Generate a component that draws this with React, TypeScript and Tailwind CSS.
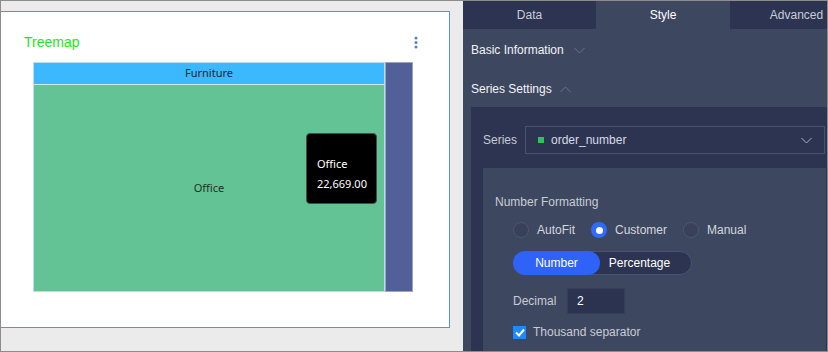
import React from "react";

function Chevron({ up = false, className = "" }: { up?: boolean; className?: string }) {
  return (
    <svg width="11" height="7" viewBox="0 0 11 7" className={className}>
      <path d={up ? "M0.5 6 L5.5 1 L10.5 6" : "M0.5 1 L5.5 6 L10.5 1"} fill="none" stroke="currentColor" strokeWidth="1" />
    </svg>
  );
}

function Radio({ checked, label }: { checked?: boolean; label: string }) {
  return (
    <div className="flex items-center">
      {checked ? (
        <div className="w-[16px] h-[16px] rounded-full bg-[#2f6bff] flex items-center justify-center">
          <div className="w-[7px] h-[7px] rounded-full bg-white" />
        </div>
      ) : (
        <div className="w-[16px] h-[16px] rounded-full border border-[#4d5674] bg-[#38405a]" />
      )}
      <span className="ml-[8px] text-[12px] text-[#d2d6df]">{label}</span>
    </div>
  );
}

export default function App() {
  return (
    <div
      className="w-[828px] h-[352px] border border-[#8c8c8c] flex overflow-hidden"
      style={{ fontFamily: '"Liberation Sans", Arial, sans-serif' }}
    >
      {/* Left pane */}
      <div className="w-[462px] h-full bg-[#ebebeb] pt-[10px]">
        <div className="relative w-[449px] h-[317px] bg-white border border-l-0 border-[#5b8def]">
          <div className="flex items-center justify-between pl-[23px] pr-[31px] pt-[22px] h-[38px]">
            <span className="text-[14px] leading-[16px] text-[#22e622]">Treemap</span>
            <svg width="4" height="13" viewBox="0 0 4 13">
              <circle cx="2" cy="2" r="1.5" fill="#4a7ee0" />
              <circle cx="2" cy="6.5" r="1.5" fill="#4a7ee0" />
              <circle cx="2" cy="11" r="1.5" fill="#4a7ee0" />
            </svg>
          </div>
          <div
            className="ml-[32px] mt-[12px] flex h-[230px] w-[380px]"
            style={{ fontFamily: '"Noto Sans", "Open Sans", sans-serif' }}
          >
            <div className="w-[352px] h-full flex flex-col border border-[#b9dcf2]">
              <div className="h-[22px] bg-[#3bb8ff] border-b border-[#cfe9f7] flex items-center justify-center text-[11px] text-[#1a2838]">
                Furniture
              </div>
              <div className="flex-1 bg-[#63c394] flex items-center justify-center text-[11px] text-[#1a3526]">
                Office
              </div>
            </div>
            <div className="w-[28px] h-full bg-[#52609a] border border-[#9ca4c8]" />
          </div>
          <div
            className="absolute left-[305px] top-[121px] w-[71px] h-[71px] rounded-[4px] bg-black border border-[#4a4a4a] pl-[10px] pt-[20px] text-white text-[11px] leading-[20px]"
            style={{ fontFamily: '"Noto Sans", "Open Sans", sans-serif' }}
          >
            <div>Office</div>
            <div>22,669.00</div>
          </div>
        </div>
      </div>

      {/* Right pane */}
      <div className="flex-1 h-full bg-[#3e4760] flex flex-col overflow-hidden">
        <div className="h-[28px] flex shrink-0 bg-[#2c3451]">
          <div className="w-[133px] shrink-0 flex items-center justify-center text-[12px] text-[#c8ccd6]">Data</div>
          <div className="w-[134px] shrink-0 flex items-center justify-center text-[12px] text-white bg-[#3e4760]">Style</div>
          <div className="w-[133px] shrink-0 flex items-center justify-center text-[12px] text-[#c8ccd6]">Advanced</div>
        </div>
        <div className="h-[42px] shrink-0 flex items-center pl-[8px] text-[12px] text-[#f2f3f6]">
          <span>Basic Information</span>
          <Chevron className="ml-[10px] text-[#6b7391]" />
        </div>
        <div className="h-[36px] shrink-0 flex items-center pl-[8px] text-[12px] text-[#f2f3f6]">
          <span>Series Settings</span>
          <Chevron up className="ml-[8px] text-[#6b7391]" />
        </div>
        <div className="ml-[8px] flex-1 shrink-0 bg-[#2c3451] pl-[12px] pt-[19px]">
          <div className="flex items-center h-[28px]">
            <span className="w-[42px] text-[12px] text-[#c8ccd6]">Series</span>
            <div className="w-[300px] h-[28px] border border-[#485170] flex items-center pl-[12px] pr-[12px]">
              <div className="w-[6px] h-[6px] bg-[#2ec45a]" />
              <span className="ml-[7px] text-[12px] text-[#d8dbe3]">order_number</span>
              <Chevron className="ml-auto text-[#aab0c2]" />
            </div>
          </div>
          <div className="mt-[14px] mr-[1px] h-[200px] bg-[#3e4760] pl-[12px] pt-[27px]">
            <div className="text-[12px] leading-[14px] text-[#c8ccd6]">Number Formatting</div>
            <div className="pl-[18px]">
              <div className="mt-[13px] flex items-center gap-[8px] h-[16px]">
                <div className="w-[70px]"><Radio label="AutoFit" /></div>
                <div className="w-[84px]"><Radio checked label="Customer" /></div>
                <Radio label="Manual" />
              </div>
              <div className="mt-[13px] w-[179px] h-[24px] rounded-full border border-[#4b5474] bg-[#2c3451] flex text-[12px] text-white">
                <div className="w-[87px] -ml-px -my-px h-[24px] rounded-full bg-[#2f62f6] flex items-center justify-center">Number</div>
                <div className="flex-1 flex items-center justify-center pr-[12px]">Percentage</div>
              </div>
              <div className="mt-[13px] flex items-center">
                <span className="w-[54px] text-[12px] text-[#c8ccd6]">Decimal</span>
                <div className="w-[58px] h-[26px] bg-[#2b3350] border border-[#353e5a] flex items-center pl-[9px] text-[12px] text-white">2</div>
              </div>
              <div className="mt-[9px] flex items-center">
                <div className="w-[13px] h-[13px] bg-[#1e88ff] flex items-center justify-center">
                  <svg width="10" height="9" viewBox="0 0 10 9">
                    <path d="M1 4.5 L4 7.5 L9 1.5" fill="none" stroke="white" strokeWidth="2" />
                  </svg>
                </div>
                <span className="ml-[7px] text-[12px] text-[#c8ccd6]">Thousand separator</span>
              </div>
            </div>
          </div>
        </div>
      </div>
    </div>
  );
}
